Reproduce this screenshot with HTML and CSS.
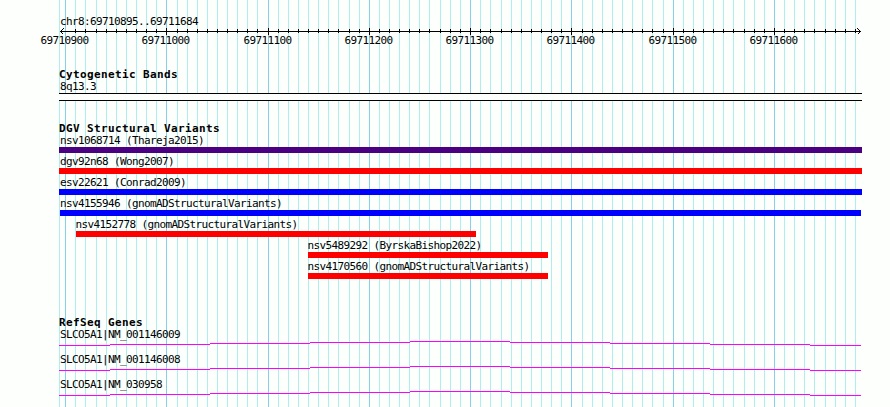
FILE: index.html
```
<!DOCTYPE html>
<html lang="en">
<head>
<meta charset="utf-8">
<title>chr8:69710895..69711684</title>
<link rel="stylesheet" href="styles.css">
</head>
<body>
<svg class="grid" id="grid" width="890" height="407" aria-hidden="true"><path class="minor"/><path class="major"/></svg>
<main class="browser">
  <section class="scale">
    <div class="label">chr8:69710895..69711684</div>
    <svg class="axis" id="axis" width="890" height="20"><path class="ink" d="M60 4H860M63 1L60 4L63 7M857 1L860 4L857 7"/><path class="ticks"/></svg>
  </section>
  <section class="track cyto">
    <h2>Cytogenetic Bands</h2>
    <div class="label">8q13.3</div>
    <div class="band"></div>
  </section>
  <section class="track variants">
    <h2>DGV Structural Variants</h2>
    <div class="variant"><div class="label">nsv1068714 (Thareja2015)</div><div class="bar indigo"></div></div>
    <div class="variant"><div class="label">dgv92n68 (Wong2007)</div><div class="bar red"></div></div>
    <div class="variant"><div class="label">esv22621 (Conrad2009)</div><div class="bar blue"></div></div>
    <div class="variant"><div class="label">nsv4155946 (gnomADStructuralVariants)</div><div class="bar blue inset"></div></div>
    <div class="variant early"><div class="label">nsv4152778 (gnomADStructuralVariants)</div><div class="bar red"></div></div>
    <div class="variant late"><div class="label">nsv5489292 (ByrskaBishop2022)</div><div class="bar red"></div></div>
    <div class="variant late"><div class="label">nsv4170560 (gnomADStructuralVariants)</div><div class="bar red"></div></div>
  </section>
  <section class="track genes">
    <h2>RefSeq Genes</h2>
    <div class="gene"><div class="label">SLCO5A1|NM_001146009</div><svg class="intron" width="803" height="5"><path d="M0 4h51v1h-51zM51 3h100v1h-100zM151 2h100v1h-100zM251 1h100v1h-100zM351 0h100v1h-100zM451 1h100v1h-100zM551 2h100v1h-100zM651 3h100v1h-100zM751 4h51v1h-51z"/></svg></div>
    <div class="gene"><div class="label">SLCO5A1|NM_001146008</div><svg class="intron" width="803" height="5"><path d="M0 4h51v1h-51zM51 3h100v1h-100zM151 2h100v1h-100zM251 1h100v1h-100zM351 0h100v1h-100zM451 1h100v1h-100zM551 2h100v1h-100zM651 3h100v1h-100zM751 4h51v1h-51z"/></svg></div>
    <div class="gene"><div class="label">SLCO5A1|NM_030958</div><svg class="intron" width="803" height="5"><path d="M0 4h51v1h-51zM51 3h100v1h-100zM151 2h100v1h-100zM251 1h100v1h-100zM351 0h100v1h-100zM451 1h100v1h-100zM551 2h100v1h-100zM651 3h100v1h-100zM751 4h51v1h-51z"/></svg></div>
  </section>
</main>
<script src="ruler.js"></script>
</body>
</html>
```
FILE: styles.css
```
* { box-sizing: border-box; }
body {
  margin: 0;
  height: 407px;
  overflow: hidden;
  position: relative;
  background: #fdfffc;
  color: #000;
  font: 11px/14px "DejaVu Sans Mono", monospace;
  letter-spacing: -0.622px;
}
svg { display: block; overflow: visible; }
.grid { position: absolute; left: 0; top: 0; }
.grid .minor { fill: #afeeee; }
.grid .major { fill: #87ceeb; }
.browser { position: relative; }
.label { height: 12px; padding-left: 1px; white-space: pre; }
h2 {
  margin: 0;
  height: 12px;
  font-size: 11px;
  line-height: 14px;
  font-weight: bold;
  letter-spacing: 0.378px;
  white-space: pre;
}
.scale { height: 68px; padding-top: 15px; }
.scale .label { margin-left: 59px; }
.axis .ink { fill: none; stroke: #000; transform: translate(.5px, .5px); shape-rendering: crispEdges; }
.axis .ticks { fill: #000; }
.axis text { fill: #000; }
.track { width: 803px; margin-left: 59px; }
.cyto { height: 54px; }
.band { height: 8px; margin-top: 1px; border: solid #000; border-width: 1px 0; background: #fdfffc; }
.variants { height: 194px; }
.variant { height: 21px; }
.bar { height: 6px; margin-top: 1px; }
.indigo { background: #4b0082; }
.red { background: #f00; }
.blue { background: #00f; }
.inset { margin-left: 1px; margin-right: 1px; }
.early { margin-left: 17px; width: 400px; }
.late { margin-left: 249px; width: 240px; }
.early .label, .late .label { padding-left: 0; margin-left: -0.5px; }
.gene { height: 25px; }
.intron { margin-top: -1px; padding-top: 0; transform: translateY(2px); }
.intron path { fill: #f0f; }
```
FILE: ruler.js
```
// Pixel columns of the ruler, one for every ten bases.
const wide = new Set([85, 166, 257, 338, 429, 490, 571, 652, 733, 814]);
const columns = [];
for (let x = 65; x <= 855; x += wide.has(x) ? 11 : 10) columns.push(x);
const isMajor = (i) => i % 10 === 0;
const lines = (xs) => xs.map((x) => `M${x} 0h1v407h-1z`).join("");
const grid = document.getElementById("grid");
grid.querySelector(".minor").setAttribute("d", lines([59, ...columns.filter((x, i) => !isMajor(i))]));
grid.querySelector(".major").setAttribute("d", lines(columns.filter((x, i) => isMajor(i))));

const axis = document.getElementById("axis");
axis.querySelector(".ticks").setAttribute("d", columns.slice(1).map((x, i) =>
  isMajor(i + 1) ? `M${x} 1h1v7h-1z` : `M${x} 2h1v4h-1z`).join(""));
columns.forEach((x, i) => {
  if (!isMajor(i)) return;
  const t = document.createElementNS("http://www.w3.org/2000/svg", "text");
  t.setAttribute("x", x - 24.5);
  t.setAttribute("y", 17);
  t.textContent = 69710900 + i * 10;
  axis.appendChild(t);
});
```
